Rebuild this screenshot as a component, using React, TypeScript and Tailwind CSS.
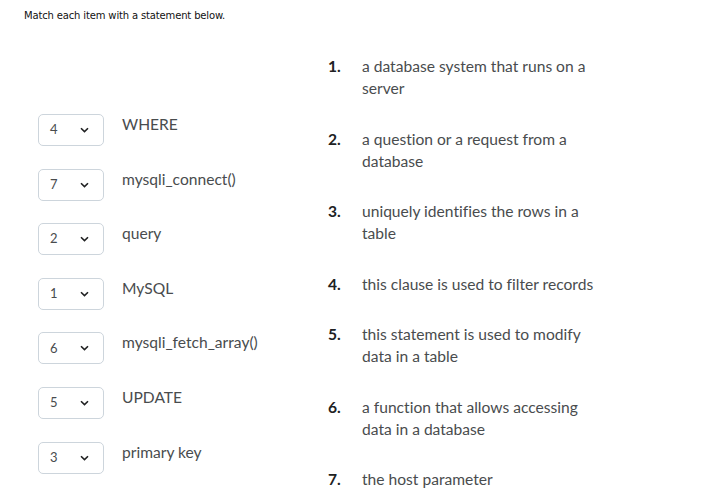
import React from "react";

const left = [
  { n: "4", label: "WHERE" },
  { n: "7", label: "mysqli_connect()" },
  { n: "2", label: "query" },
  { n: "1", label: "MySQL" },
  { n: "6", label: "mysqli_fetch_array()" },
  { n: "5", label: "UPDATE" },
  { n: "3", label: "primary key" },
];

const right = [
  "a database system that runs on a server",
  "a question or a request from a database",
  "uniquely identifies the rows in a table",
  "this clause is used to filter records",
  "this statement is used to modify data in a table",
  "a function that allows accessing data in a database",
  "the host parameter",
];

function Chevron() {
  return (
    <svg width="9" height="6" viewBox="0 0 9 6" fill="none">
      <path d="M1 1.2 L4.5 4.6 L8 1.2" stroke="#202122" strokeWidth="1.6" />
    </svg>
  );
}

export default function App() {
  return (
    <div className="w-[719px] h-[488px] bg-white overflow-hidden font-['Lato',sans-serif] text-[#494c4e] [font-variant-ligatures:none]">
      <p className="pl-[24px] pt-[9px] text-[10px] leading-[13px] text-[#111] font-['DejaVu_Sans',Verdana,sans-serif] tracking-[-0.15px]">
        Match each item with a statement below.
      </p>

      <div className="flex">
        {/* left: dropdowns */}
        <div className="flex flex-col gap-[22.6px] pl-[38px] pt-[92px] w-[328px] shrink-0">
          {left.map((item) => (
            <div key={item.label} className="flex items-start gap-[18px]">
              <div className="w-[66px] h-[32px] shrink-0 border border-[#cdd5dc] rounded-[5px] flex items-center justify-between pl-[11px] pr-[14px]">
                <span className="text-[13px]">{item.n}</span>
                <Chevron />
              </div>
              <span className="text-[15.6px] leading-[22px] mt-[-1px]">{item.label}</span>
            </div>
          ))}
        </div>

        {/* right: statements */}
        <div className="flex flex-col gap-[28.5px] pt-[33px]">
          {right.map((text, i) => (
            <div key={i} className="flex text-[15.6px] leading-[22px]">
              <span className="w-[34px] shrink-0 font-bold text-[#202122]">{i + 1}.</span>
              <span className="w-[240px]">{text}</span>
            </div>
          ))}
        </div>
      </div>
    </div>
  );
}
